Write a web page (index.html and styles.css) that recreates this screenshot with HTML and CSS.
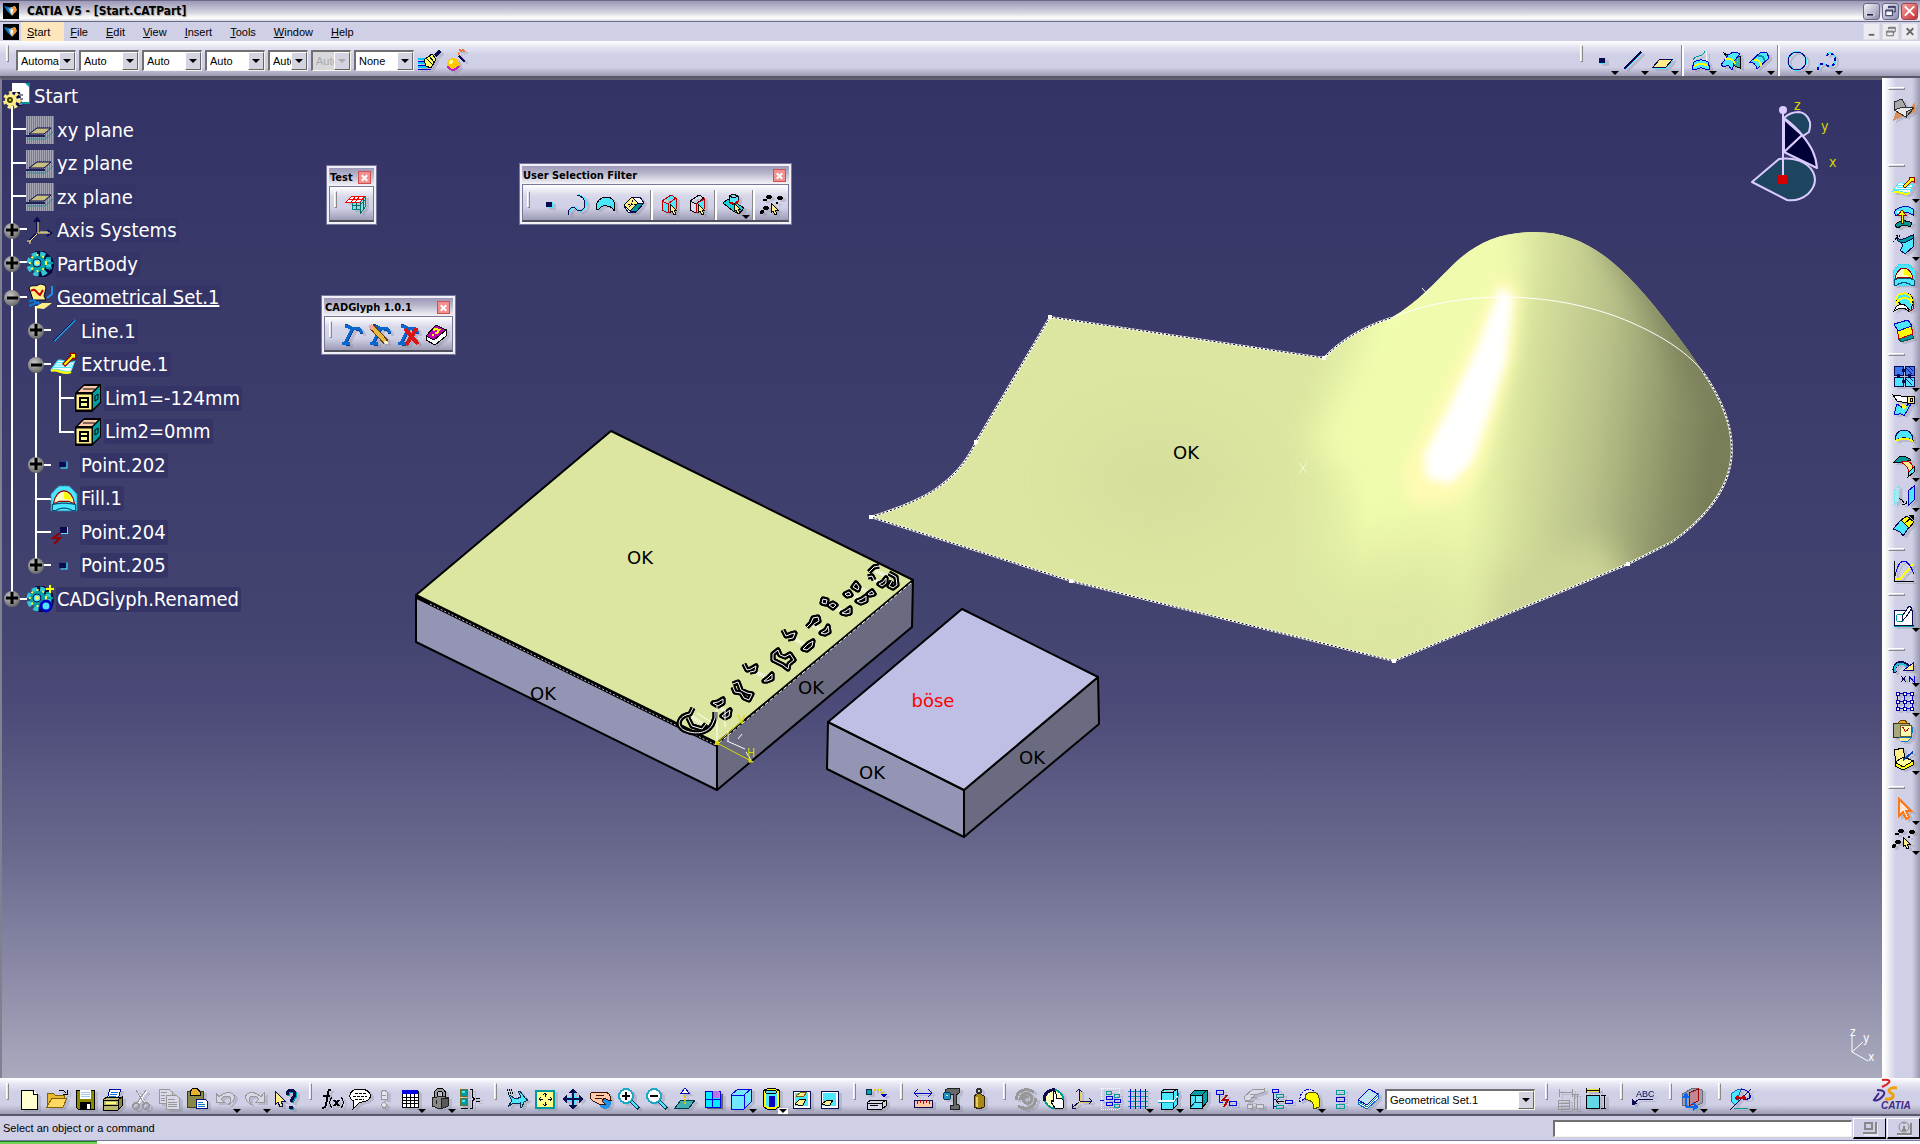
FILE: index.html
```html
<!DOCTYPE html>
<html lang="en">
<head>
  <meta charset="UTF-8" />
  <title>CATIA V5 - [Start.CATPart]</title>
  <link rel="stylesheet" href="styles.css">
</head>
<body>

  <!-- shared icons -->
  <svg class="sprite" aria-hidden="true">
    <defs>
      <radialGradient id="ball" cx="40%" cy="35%" r="65%"><stop offset="0" stop-color="#c8c8c8"/><stop offset="1" stop-color="#6a6a6a"/></radialGradient>
      <linearGradient id="space" x1="0" y1="0" x2="1" y2="1"><stop offset="0" stop-color="#0878d8"/><stop offset=".5" stop-color="#fff0b0"/><stop offset="1" stop-color="#c03800"/></linearGradient>
    </defs>
    <symbol id="app" viewBox="0 0 16 16"><path fill="#000" d="M0 0h16v16H0z"/><path fill="#0a70c8" d="M1 3l5 1 3 4-1 4-4-4z"/><path fill="url(#space)" d="M5 5l7-2 2 4-5 6z"/><path fill="#ff9030" d="M9 4h4v5l-3 1z"/><path fill="#fff" d="M8 6h2v3H8z"/></symbol>
    <symbol id="plus" viewBox="0 0 16 16"><circle cx="8" cy="8" r="8" fill="url(#ball)" stroke="none"/><path fill="none" stroke="#000" stroke-width="3" d="M2 7h12M8 1v12"/></symbol>
    <symbol id="minus" viewBox="0 0 16 16"><circle cx="8" cy="8" r="8" fill="url(#ball)" stroke="none"/><path fill="none" stroke="#000" stroke-width="3" d="M3 8h11"/></symbol>
    <symbol id="plane" viewBox="0 0 28 28"><path fill="#77779a" stroke="none" d="M0 0h28v28H0z"/><path stroke="#a6a6b4" stroke-width="28" stroke-dasharray="1 1" d="M0 14h28"/><path fill="#c8c080" stroke="#000050" d="M3 18l8-6h14l-7 6z"/><path stroke="#20205a" stroke-width="2" d="M0 20h19"/><path stroke="#309090" d="M1 23h18l8-7"/></symbol>
    <symbol id="gear" viewBox="0 0 28 28"><path fill="#0a0a40" stroke="none" d="M9 1h9l5 4 4 4 1 7-2 7-6 4h-9z"/><circle cx="13" cy="14" r="10" stroke="#30c8d8" stroke-width="5" stroke-dasharray="5 3"/><circle cx="12" cy="14" r="8" fill="#009fa8" stroke="none"/><circle cx="12" cy="13" r="8" stroke="#ffff40" stroke-width="2" stroke-dasharray="2 4"/><circle cx="11" cy="13" r="4" fill="#4de6ff" stroke="#0a0a50"/><circle cx="11" cy="13" r="2" fill="#ffee66" stroke="none"/><path stroke="#009fa8" stroke-width="2" d="M20 8h5M21 13h6M20 18h6"/></symbol>
    <symbol id="extrude" viewBox="0 0 24 24"><path fill="#fff" stroke="#4de6ff" d="M1 16l6-8c4-1 8 3 14 1l-3 8c-5 3-10-3-17-1z"/><path stroke="#4de6ff" d="M3 14h15M5 12h14M6 10h12"/><path stroke="#ffff00" stroke-width="2" d="M1 17c6-2 10 4 17 1"/><path fill="#ffff00" stroke="#900000" d="M17 2h5v5l-2-1-7 7-2-2 7-7z"/></symbol>
    <symbol id="fill" viewBox="0 0 24 24"><path fill="#4de6ff" stroke="#2cc8ea" stroke-dasharray="1 1" d="M1 8c2-2 4-5 7-7h8c3 2 5 5 7 7v14H1z"/><path fill="#fffbc8" stroke="#900000" d="M3 16C4 9 8 5 12 5s8 4 9 11l-5-2H8z"/><path fill="#ffff00" stroke="none" d="M12 6c4 0 6 4 7 8l-4-2h-3z"/><path fill="#4de6ff" stroke="#0a5078" d="M2 17v5h3c3-3 11-3 14 0h3v-5c-4-2-16-2-20 0z"/></symbol>
    <symbol id="point" viewBox="0 0 24 24"><path fill="#4de6ff" stroke="none" d="M9 9h6v6H9z"/><path fill="#0a0a50" stroke="none" d="M8 9h6v5H8z"/></symbol>
    <symbol id="lim" viewBox="0 0 28 28"><path fill="#000" stroke="none" d="M1 9L10 0h17v19l-9 9H1z"/><path fill="#009fa0" stroke="none" d="M19 9l7-7v16l-7 7z"/><path fill="#ffc8a8" stroke="none" d="M4 8l6-6h14l-6 6z"/><path stroke="#000" d="M9 5h12M21 12l3-2v5l-3 2z"/><path fill="#ffee88" stroke="#000" d="M2 10h16v16H2z"/><path fill="#ffff98" stroke="#000" stroke-width="2" d="M6 14h8v9H6zM6 18h8"/></symbol>
    <symbol id="cursor" viewBox="0 0 10 14"><path fill="#ffee88" stroke="#000" d="M1 1v10l2-2 2 4 2-1-2-4h3z"/></symbol>
    <symbol id="dots" viewBox="0 0 24 24"><g fill="#000" stroke="none"><ellipse cx="9" cy="4" rx="3" ry="2"/><ellipse cx="5" cy="7" rx="2" ry="1.500"/><ellipse cx="20" cy="5" rx="3" ry="2"/><ellipse cx="6" cy="15" rx="3" ry="2"/><circle cx="17" cy="10" r="1"/><circle cx="2" cy="19" r="2"/></g><use href="#cursor" x="10" y="9" width="10" height="14"/></symbol>
    <symbol id="hammer" viewBox="0 0 24 24"><path stroke="#0a3c98" stroke-width="3" d="M5 2l7 3 8 2 2 4M13 6L6 20M2 20l8 2"/><path stroke="#0868d0" stroke-width="3" d="M5 3l7 2 8 1 2 4M12 6L5 20M2 20l8 1"/></symbol>
    <symbol id="spline" viewBox="0 0 24 24"><path stroke="#4de6ff" stroke-width="2" d="M3 22c0-8 6-9 8-6s8 2 9-5c0-5-4-8-8-9"/><path stroke="#0a0a50" d="M2 22c0-8 6-9 8-6s9 2 9-5c0-5-4-8-8-9"/></symbol>
  </svg>

  <header>
    <div class="titlebar">
      <svg class="app-icon"><use href="#app"/></svg>
      <h1>CATIA V5 - [Start.CATPart]</h1>
      <div class="win-buttons">
        <button aria-label="Minimize"><svg viewBox="0 0 16 16"><path stroke="#fff" stroke-width="3" d="M2 12h9"/><path stroke="#202050" stroke-width="2" d="M3 12h7"/></svg></button>
        <button aria-label="Restore"><svg viewBox="0 0 16 16"><path stroke="#202050" d="M6 5V3h7v6h-2M6 4h7"/><path fill="#fff" stroke="#202050" d="M3 7h7v6H3zM3 8h7"/></svg></button>
        <button class="close" aria-label="Close"><svg viewBox="0 0 16 16"><path stroke="#fff" stroke-width="2" d="M3 3l10 10M13 3L3 13"/></svg></button>
      </div>
    </div>

    <nav class="menubar">
      <svg class="app-icon"><use href="#app"/></svg>
      <ul>
        <li class="active"><a href="#"><u>S</u>tart</a></li>
        <li><a href="#"><u>F</u>ile</a></li>
        <li><a href="#"><u>E</u>dit</a></li>
        <li><a href="#"><u>V</u>iew</a></li>
        <li><a href="#"><u>I</u>nsert</a></li>
        <li><a href="#"><u>T</u>ools</a></li>
        <li><a href="#"><u>W</u>indow</a></li>
        <li><a href="#"><u>H</u>elp</a></li>
      </ul>
      <div class="win-buttons doc-buttons">
        <button aria-label="Minimize document"><svg viewBox="0 0 16 16"><path stroke="#666" stroke-width="2" d="M5 11h6"/></svg></button>
        <button aria-label="Restore document"><svg viewBox="0 0 16 16"><path stroke="#666" d="M6 5V3h7v5h-2M6 4h7M4 7h7v5H4zM4 8h7"/></svg></button>
        <button aria-label="Close document"><svg viewBox="0 0 16 16"><path stroke="#666" stroke-width="2" d="M5 4l7 7M12 4l-7 7"/></svg></button>
      </div>
    </nav>

    <div class="toolbar top-toolbar">
      <span class="grip"></span>
      <div class="combos">
        <label class="combo"><select aria-label="Fill color"><option>Automatic</option></select><i></i></label>
        <label class="combo"><select aria-label="Transparency"><option>Auto</option></select><i></i></label>
        <label class="combo"><select aria-label="Line weight"><option>Auto</option></select><i></i></label>
        <label class="combo"><select aria-label="Line type"><option>Auto</option></select><i></i></label>
        <label class="combo short"><select aria-label="Point symbol"><option>Auto</option></select><i></i></label>
        <label class="combo short disabled"><select aria-label="Rendering style" disabled><option>Auto</option></select><i></i></label>
        <label class="combo"><select aria-label="Layer"><option>None</option></select><i></i></label>
      </div>
      <button class="tool wide" aria-label="Painter"><svg viewBox="0 0 24 24"><path stroke="#00c8ff" stroke-width="2" d="M1 10h8M1 14h9M1 18h12"/><path stroke="#0000c0" d="M1 12h8M1 16h10M1 20h13"/><path fill="#ffff60" stroke="#000" d="M7 11l8-6 4 5-5 9-5-2z"/><path fill="#fff" stroke="#000" d="M9 9l7 7M12 7l5 6"/><path stroke="#0a0a50" stroke-width="3" d="M18 7l5-5"/></svg></button>
      <button class="tool" aria-label="Wizard"><svg viewBox="0 0 24 24"><circle cx="7" cy="15" r="6" fill="#ffc800" stroke="none"/><path stroke="#c020c0" stroke-width="2" d="M2 17c1 5 8 5 11 0"/><circle cx="5" cy="13" r="2" fill="#ffffa0" stroke="none"/><path stroke="#0a0a50" stroke-width="2" d="M13 7l6 6"/><path stroke="#e87848" stroke-width="2" stroke-dasharray="2 1" d="M12 5l4-3h4M13 1h6"/></svg></button>

      <div class="toolbar-right">
        <span class="grip"></span>
        <button class="tool more" aria-label="Point"><svg><use href="#point"/></svg></button>
        <button class="tool more" aria-label="Line"><svg viewBox="0 0 24 24"><path stroke="#4de6ff" d="M4 21L21 4"/><path stroke="#0a0a50" stroke-width="2" d="M3 20L20 3"/></svg></button>
        <button class="tool more" aria-label="Plane"><svg viewBox="0 0 24 24"><path stroke="#4de6ff" d="M2 19h14l6-8"/><path fill="#ffee88" stroke="#0a0a50" d="M2 18l7-8h13l-7 8z"/></svg></button>
        <span class="sep"></span>
        <button class="tool more" aria-label="Projection"><svg viewBox="0 0 24 24"><path stroke="#009999" d="M4 11c3-7 8 0 12-9"/><path stroke="#fff" d="M17 3v10"/><path fill="#4de6ff" stroke="#0000c0" d="M3 20l2-7c5-3 9-3 14 0l2 7-3 1c-4-3-8-3-12 0z"/><path stroke="#ffff00" stroke-width="2" d="M5 17c5-3 9-3 14 0"/></svg></button>
        <button class="tool" aria-label="Intersection"><svg viewBox="0 0 24 24"><path fill="#30b0a8" stroke="#000" d="M5 4l6 3h10v12l-8-3z"/><path stroke="#4de6ff" stroke-dasharray="1 2" d="M12 9h8M12 12h8"/><path fill="#4de6ff" stroke="#0000c0" d="M2 16L9 6c4-3 8-4 12-1l-5 6-3 10-4-5-4 2z"/><path stroke="#ffff00" stroke-width="2" d="M6 10c5-1 9 1 10 5"/></svg></button>
        <button class="tool more" aria-label="Parallel Curve"><svg viewBox="0 0 24 24"><path fill="#4de6ff" stroke="#0000c0" d="M2 14L14 3l6 1 2 5-12 11c-1-5-4-7-8-6z"/><path stroke="#ffff00" stroke-width="2" d="M7 11c4-1 7 2 7 6"/><path stroke="#009999" stroke-width="2" d="M11 7c4-1 6 2 7 5"/></svg></button>
        <span class="sep"></span>
        <button class="tool more" aria-label="Circle"><svg viewBox="0 0 24 24"><circle cx="12" cy="12" r="9" stroke="#4de6ff" stroke-width="2"/><circle cx="12" cy="12" r="9" stroke="#0a0a80"/></svg></button>
        <button class="tool more" aria-label="Spline"><svg viewBox="0 0 24 24"><path stroke="#4de6ff" stroke-width="2" d="M3 21c0-6 4-7 8-5s10 1 9-6-7-7-8-3"/><path stroke="#0000c0" stroke-width="2" stroke-dasharray="3 3" d="M3 21c0-6 4-7 8-5s10 1 9-6-7-7-8-3"/></svg></button>
      </div>
    </div>
  </header>

  <main>
    <section class="viewport">
      <!-- part geometry -->
      <svg class="scene" viewBox="2 80 1880 998" preserveAspectRatio="xMinYMin slice">
        <defs>
          <path id="surface" d="M871 517C918 502 955 487 976 442L1050 317L1324 358C1342 339 1366 326 1391 318C1418 303 1438 279 1456 262C1477 243 1500 232 1535 232C1582 232 1616 259 1655 307C1675 332 1690 352 1703 372C1746 434 1745 490 1672 542L1628 564L1394 661L1071 581Z"/>
          <clipPath id="surfaceClip"><use href="#surface"/></clipPath>
          <linearGradient id="shade" gradientUnits="userSpaceOnUse" x1="1290" y1="400" x2="1731" y2="450">
            <stop offset="0" stop-color="#dce6a0" stop-opacity="0"/><stop offset=".2" stop-color="#f1fdae"/><stop offset=".42" stop-color="#effaad"/><stop offset=".52" stop-color="#d9e39d"/><stop offset=".7" stop-color="#b8c088"/><stop offset=".87" stop-color="#8b9267"/><stop offset=".96" stop-color="#787e58"/>
          </linearGradient>
          <filter id="soft" x="-50%" y="-50%" width="200%" height="200%"><feGaussianBlur stdDeviation="16"/></filter>
          <filter id="soft2" x="-50%" y="-50%" width="200%" height="200%"><feGaussianBlur stdDeviation="7"/></filter>
          <filter id="soft3" x="-50%" y="-50%" width="200%" height="200%"><feGaussianBlur stdDeviation="36"/></filter>
          <filter id="soft4" x="-50%" y="-50%" width="200%" height="200%"><feGaussianBlur stdDeviation="4"/></filter>
        </defs>
        <use href="#surface" fill="#dce6a0"/>
        <g clip-path="url(#surfaceClip)">
          <ellipse cx="1160" cy="480" rx="90" ry="55" fill="#d5de9c" filter="url(#soft3)"/>
          <path fill="url(#shade)" d="M1290 200H1760V640H1290z"/>
          <path fill="#f0fbae" filter="url(#soft)" d="M1340 390L1400 310L1490 230L1520 245L1505 330L1465 470L1420 500L1350 480L1310 440z"/>
          <path fill="#dce6a0" filter="url(#soft3)" d="M1220 560L1340 560L1450 540L1510 600L1480 720L1200 700z"/>
          <path fill="#cdd696" filter="url(#soft)" d="M1500 570L1600 540L1640 600L1480 680z"/>
          <path fill="#7b815b" filter="url(#soft)" d="M1595 225L1650 300L1700 400L1760 400V225z"/>
          <path fill="#fffbb4" filter="url(#soft2)" d="M1498 275L1520 288L1514 355L1496 420L1480 472L1452 504H1410L1402 470L1440 400L1475 330z"/>
          <path fill="#fff" filter="url(#soft4)" d="M1500 286L1513 296L1506 360L1487 420L1472 462L1450 484L1426 478L1424 455L1450 405L1480 340z"/>
        </g>
        <path class="edge-light" d="M871 517C918 502 955 487 976 442L1050 317L1324 358C1342 339 1366 326 1391 318M1703 372C1746 434 1745 490 1672 542L1628 564L1394 661L1071 581L871 517"/>
        <path class="edge-dots" d="M871 517C918 502 955 487 976 442L1050 317L1324 358C1342 339 1366 326 1391 318M1703 372C1746 434 1745 490 1672 542L1628 564L1394 661L1071 581L871 517"/>
        <path fill="none" stroke="#fff" d="M1391 318C1475 284 1570 296 1630 322C1665 337 1690 355 1703 372"/>
        <path fill="#fff" d="M869 515h4v4h-4zM974 440h4v4h-4zM1048 315h4v4h-4zM1322 356h4v4h-4zM1069 579h4v4h-4zM1392 659h4v4h-4zM1626 562h4v4h-4z"/>
        <path fill="none" stroke="#f8ffd8" d="M1299 463l8 10M1307 463l-8 10M1422 288l8 9M1430 288l-8 9"/>

        <!-- engraved block -->
        <g stroke="#000" stroke-width="2" stroke-linejoin="round">
          <path fill="#9494b4" d="M416 597L717 745V790L416 642z"/>
          <path fill="#6a6a80" d="M717 744L913 580L912 627L717 790z"/>
          <path fill="#dce6a0" d="M611 431L913 580L717 743L416 595z"/>
          <path fill="none" d="M417 598L717 746"/>
        </g>
        <path fill="none" stroke="#fff" stroke-dasharray="4 2" d="M911 583L719 743"/>
        <path fill="none" stroke="#ccc" stroke-dasharray="2 2" d="M430 604L716 745"/>
        <g>
          <path fill="none" stroke="#fff" stroke-width="4" stroke-dasharray="1 1" d="M692 717l12 8M718 705l9 8M749 669l19 9M790 637l18 9M812 625l13 7M834 607l12 6M858 587l12 6M850 594l12 6M875 570l14 8M869 577l12 6"/>
          <path id="glyphs" class="glyph-outline" d="M693 708l-3 6c-12 2-14 12-6 16s22 5 28-5l3-7v-6M688 718l4 8 10 3 4-5M713 703l5-1 5-3v4l-5 3zM722 716l4-3 4-3-1 6-4 2zM733 684l5-2 3 8 6 3 5 1-3 6-5-2-3-5-6-1-2-5M744 664l3 6 4-1 5-3-1 5-5 1M764 681l4-3 4-4v5l-5 2zM773 654l5-4 2 5 5 2 5-3 4 6-5 4-1 5-5-4-6-3-4-2zM783 630l3 6 5-2 4-1-2 5-5 1M803 649l5-5 5-3-1 5-5 4zM807 627l4-4 2-5 5-1 1 4-5 3M821 633l5-3 2-4 1 6-4 2zM822 603l1-4 4 1-1 4zM829 605l4-2 3 2-3 3zM842 613l4-2 4-3v5l-4 1zM845 594l4-2 2 3-4 1zM853 587l3-4 3 4-1 3zM868 594l4-3 2 3-4 1zM857 601l5-2 4-3v5l-5 2zM869 572l5-5 5-1M868 577l4-1 2 4M879 584l4-2 3-4v5l-4 3zM889 573l7 4 1 8-4 3-4-2 3-5"/>
          <use href="#glyphs" class="glyph-fill"/>
          <path class="glyph-fill" d="M693 708l-3 6c-12 2-14 12-6 16s22 5 28-5l3-7v-6M688 718l4 8 10 3 4-5M713 703l5-1 5-3v4l-5 3zM722 716l4-3 4-3-1 6-4 2zM733 684l5-2 3 8 6 3 5 1-3 6-5-2-3-5-6-1-2-5M744 664l3 6 4-1 5-3-1 5-5 1M764 681l4-3 4-4v5l-5 2zM773 654l5-4 2 5 5 2 5-3 4 6-5 4-1 5-5-4-6-3-4-2zM783 630l3 6 5-2 4-1-2 5-5 1M803 649l5-5 5-3-1 5-5 4zM807 627l4-4 2-5 5-1 1 4-5 3M821 633l5-3 2-4 1 6-4 2zM822 603l1-4 4 1-1 4zM829 605l4-2 3 2-3 3zM842 613l4-2 4-3v5l-4 1zM845 594l4-2 2 3-4 1zM853 587l3-4 3 4-1 3zM868 594l4-3 2 3-4 1zM857 601l5-2 4-3v5l-5 2zM869 572l5-5 5-1M868 577l4-1 2 4M879 584l4-2 3-4v5l-4 3zM889 573l7 4 1 8-4 3-4-2 3-5"/>
        </g>
        <path fill="none" stroke="#fff" d="M717 743v-37M725 727v-17M697 713l14 9M727 741l18 8M728 741v-10M738 739l4-5M746 752l5 8"/>
        <path fill="none" stroke="#d8d800" d="M717 743L753 762M717 743l25-22"/>
        <path fill="#d8d800" d="M715 741h4v4h-4zM748 758l6 4-5 1z"/>
        <text class="axis" x="738" y="724">V</text>
        <text class="axis" x="747" y="757">H</text>

        <!-- plain block -->
        <g stroke="#000" stroke-width="2" stroke-linejoin="round">
          <path fill="#9494b4" d="M828 722L964 790V837L827 769z"/>
          <path fill="#6a6a80" d="M964 790L1098 677L1099 724L964 837z"/>
          <path fill="#bfbfe6" d="M962 609L1098 677L964 790L828 722z"/>
        </g>

        <g class="note">
          <text x="1186" y="459">OK</text>
          <text x="640" y="564">OK</text>
          <text x="543" y="700">OK</text>
          <text x="811" y="694">OK</text>
          <text x="872" y="779">OK</text>
          <text x="1032" y="764">OK</text>
          <text class="bad" x="933" y="707">böse</text>
        </g>

        <!-- compass -->
        <g stroke="#dccbff" stroke-width="2" stroke-linejoin="round">
          <path fill="#1d4560" d="M1784 118c4-4 9-6 15-6 8 1 12 9 11 15l-1 5-6 4c-6-8-12-13-19-18z"/>
          <path fill="#000038" d="M1784 152l18-17c9 11 14 20 15 33z"/>
          <path fill="#000038" d="M1784 119l18 16-18 17z"/>
          <path fill="#1d4560" d="M1752 182l27-23c14-2 28 2 34 13 4 8 2 15-5 22-6 5-14 7-21 6z"/>
          <path fill="none" d="M1783 110v66"/>
        </g>
        <circle cx="1783" cy="110" r="4" fill="#dccbff"/>
        <path fill="#d40000" d="M1778 175h9v9h-9z"/>
        <text class="axis big" x="1794" y="110">z</text>
        <text class="axis big" x="1821" y="131">y</text>
        <text class="axis big" x="1829" y="167">x</text>

        <path fill="none" stroke="#fff" d="M1852 1035v17l11-10M1852 1052l16 9"/>
        <text class="axis light" x="1850" y="1036">z</text>
        <text class="axis light" x="1863" y="1042">y</text>
        <text class="axis light" x="1868" y="1061">x</text>
      </svg>

      <!-- specification tree -->
      <div class="tree">
        <svg class="tree-lines" viewBox="0 0 110 536"><path d="M10 26v493M10 49h15M10 83h15M10 116h15M10 149h15M10 182h15M10 217h15M10 519h15M34 226v259M34 250h15M34 284h15M34 385h15M34 419h15M34 452h15M34 485h15M58 296v56h14M58 318h14"/></svg>
        <ul>
          <li class="root"><svg viewBox="0 0 28 28"><path fill="#009999" stroke="none" d="M9 0h18v21H9z"/><path fill="#fff" stroke="none" d="M9 0h13l4 4v15H9z"/><path fill="#0a0a50" stroke="none" d="M9 9h8l2 14h-8z"/><circle cx="9" cy="17" r="7" stroke="#ffee88" stroke-width="4" stroke-dasharray="3 3"/><circle cx="8" cy="17" r="6" fill="#ffee88" stroke="none"/><circle cx="7" cy="17" r="2" fill="#ffff00" stroke="#404000" stroke-width="2"/><path stroke="#808098" stroke-width="2" d="M16 12h4M17 16h3M16 21h3"/></svg><span>Start</span></li>
          <li><svg><use href="#plane"/></svg><span>xy plane</span></li>
          <li><svg><use href="#plane"/></svg><span>yz plane</span></li>
          <li><svg><use href="#plane"/></svg><span>zx plane</span></li>
          <li><button aria-label="Expand Axis Systems"><svg><use href="#plus"/></svg></button><svg viewBox="0 0 28 28"><path stroke="#0a0a50" stroke-width="2" d="M11 15V1M8 5l3-4 3 4M21 13l4 3-4 3M10 17l-7 7"/><path stroke="#ffee88" d="M12 5v11h12M11 17l-8 8M1 24h3v3M14 15h8"/></svg><span>Axis Systems</span></li>
          <li><button aria-label="Expand PartBody"><svg><use href="#plus"/></svg></button><svg><use href="#gear"/></svg><span>PartBody</span></li>
          <li class="current"><button aria-label="Collapse Geometrical Set.1"><svg><use href="#minus"/></svg></button><svg viewBox="0 0 28 28"><path fill="#ffee88" stroke="#000030" d="M3 4c2-4 6-1 9-3s8 0 8 3l-2 8 2 4H7z"/><path stroke="#c00000" stroke-width="2" d="M5 7c4-4 5 2 9 4l3-5"/><path stroke="#0878d8" stroke-width="2" d="M3 18c3-3 6-2 7 1M3 22l9-4 2 4"/><path stroke="#2090e8" stroke-width="2" d="M26 2v8l-5 4"/><path fill="#ffee88" stroke="none" d="M8 24l8-5 10 0-8 6z"/></svg><span>Geometrical Set.1</span></li>
          <li class="l2"><button aria-label="Expand Line.1"><svg><use href="#plus"/></svg></button><svg viewBox="0 0 28 28"><path stroke="#2098e0" stroke-width="2" d="M4 24L25 3"/><path stroke="#0a0a50" d="M3 24L24 3"/></svg><span>Line.1</span></li>
          <li class="l2"><button aria-label="Collapse Extrude.1"><svg><use href="#minus"/></svg></button><svg><use href="#extrude"/></svg><span>Extrude.1</span></li>
          <li class="l3"><svg><use href="#lim"/></svg><span>Lim1=-124mm</span></li>
          <li class="l3"><svg><use href="#lim"/></svg><span>Lim2=0mm</span></li>
          <li class="l2"><button aria-label="Expand Point.202"><svg><use href="#plus"/></svg></button><svg><use href="#point"/></svg><span>Point.202</span></li>
          <li class="l2"><svg><use href="#fill"/></svg><span>Fill.1</span></li>
          <li class="l2"><svg viewBox="0 0 28 28"><path fill="#4de6ff" stroke="none" d="M11 9h7v7h-7z"/><path fill="#0a0a50" stroke="none" d="M10 9h7v6h-7z"/><path stroke="#900000" stroke-width="2" d="M10 15l-7 5h7l-6 6"/></svg><span>Point.204</span></li>
          <li class="l2"><button aria-label="Expand Point.205"><svg><use href="#plus"/></svg></button><svg><use href="#point"/></svg><span>Point.205</span></li>
          <li><button aria-label="Expand CADGlyph.Renamed"><svg><use href="#plus"/></svg></button><svg viewBox="0 0 28 28"><use href="#gear"/><circle cx="20" cy="21" r="5" fill="#4de6ff" stroke="#0000c0" stroke-width="3"/><path stroke="#ffff00" stroke-width="2" d="M24 0v8M20 4h8"/></svg><span>CADGlyph.Renamed</span></li>
        </ul>
      </div>

      <!-- floating toolbars -->
      <div class="float float-test">
        <div class="float-title"><h2>Test</h2><button aria-label="Close Test"><svg viewBox="0 0 12 12"><path d="M3 3l6 6M9 3L3 9"/></svg></button></div>
        <div class="float-body">
          <span class="grip"></span>
          <button class="tool" aria-label="Test"><svg viewBox="0 0 24 24"><path fill="#98d8d8" stroke="#008888" d="M7 9h8l5-5v10l-5 7v-5H7z"/><path stroke="#006868" d="M11 9v7M15 9v12M7 12h8l5-5M18 6v11"/><path fill="#fff" stroke="#f00" d="M1 9l6-6h13l-5 6zM4 6h14M6 9l5-6M10 9l5-6"/></svg></button>
        </div>
      </div>

      <div class="float float-filter">
        <div class="float-title"><h2>User Selection Filter</h2><button aria-label="Close User Selection Filter"><svg viewBox="0 0 12 12"><path d="M3 3l6 6M9 3L3 9"/></svg></button></div>
        <div class="float-body">
          <span class="grip"></span>
          <button class="tool" aria-label="Point Filter"><svg><use href="#point"/></svg></button>
          <button class="tool" aria-label="Curve Filter"><svg><use href="#spline"/></svg></button>
          <button class="tool" aria-label="Surface Filter"><svg viewBox="0 0 24 24"><path fill="#4de6ff" stroke="#000" d="M2 16C2 8 7 4 12 4s9 3 9 11l-1 3c-2-6-12-7-15-2z"/></svg></button>
          <button class="tool" aria-label="Volume Filter"><svg viewBox="0 0 24 24"><path fill="#fff" stroke="#0a0a50" d="M10 4h8l4 6-8 9H6l-4-6z"/><path fill="#ffee88" stroke="#000" d="M2 12l8-8 6 6-8 8z"/><path fill="#009999" stroke="#0a0a50" d="M8 18l8-8h6l-8 9z"/><path stroke="#000" stroke-dasharray="2 1" d="M6 11h8M11 7l-4 8"/></svg></button>
          <span class="sep"></span>
          <button class="tool" aria-label="Feature Element Filter"><svg viewBox="0 0 24 24"><path fill="#4de6ff" stroke="#c00000" d="M4 8l9-6 5 3v11l-8 4-6-3zM4 8l6 3 8-6M10 11v9"/><use href="#cursor" x="11" y="10" width="10" height="13"/></svg></button>
          <button class="tool" aria-label="Geometrical Element Filter"><svg viewBox="0 0 24 24"><path fill="#d8d8ee" stroke="#000" d="M4 8l9-6 5 3v11l-8 4-6-3zM4 8l6 3 8-6M10 11v9"/><path fill="#4de6ff" stroke="#c00000" d="M10 11l8-5v10l-8 4z"/><use href="#cursor" x="11" y="10" width="10" height="13"/></svg></button>
          <span class="sep"></span>
          <button class="tool more" aria-label="Work On Support Selection"><svg viewBox="0 0 24 24"><path fill="#20d0d8" stroke="#000" d="M1 10l5-4 5 2 11 7-5 6-6-3z"/><path fill="#4de6ff" stroke="#000" d="M7 3l4-2 5 2v6l-4 3-5-3zM7 3l5 2 4-2"/><path stroke="#c00000" stroke-width="2" d="M7 9l5 2 5-3"/><use href="#cursor" x="11" y="9" width="10" height="13"/></svg></button>
          <span class="sep"></span>
          <button class="tool" aria-label="Quick Select"><svg><use href="#dots"/></svg></button>
        </div>
      </div>

      <div class="float float-glyph">
        <div class="float-title"><h2>CADGlyph 1.0.1</h2><button aria-label="Close CADGlyph"><svg viewBox="0 0 12 12"><path d="M3 3l6 6M9 3L3 9"/></svg></button></div>
        <div class="float-body">
          <span class="grip"></span>
          <button class="tool" aria-label="Create Text"><svg><use href="#hammer"/></svg></button>
          <button class="tool" aria-label="Edit Text"><svg viewBox="0 0 24 24"><use href="#hammer"/><path stroke="#604010" stroke-width="6" d="M4 4l14 15"/><path stroke="#e8b840" stroke-width="4" d="M5 5l12 13"/><path stroke="#f8a0a0" stroke-width="4" d="M2 2l3 4"/><path stroke="#fff0c0" stroke-width="3" d="M17 18l2 3"/></svg></button>
          <button class="tool" aria-label="Delete Text"><svg viewBox="0 0 24 24"><use href="#hammer"/><path stroke="#d81818" stroke-width="4" d="M9 6l13 15M21 5L10 22"/></svg></button>
          <button class="tool" aria-label="Help"><svg viewBox="0 0 24 24"><path fill="#fff" stroke="#000" d="M2 13l8 4 12-10v6l-11 9-9-5z"/><path fill="#c000b0" stroke="#000" d="M2 13L12 2l10 5-12 10z"/><path stroke="#ffff00" stroke-width="2" d="M9 7l3-1 3 1-2 3h-2M10 12h-2"/></svg></button>
        </div>
      </div>
    </section>

    <aside class="sidebar">
      <span class="hgrip"></span>
      <div class="dock dock-bench">
        <button class="tool" aria-label="Workbench"><svg viewBox="0 0 24 24"><path fill="#d89058" stroke="none" d="M1 23L5 10l6 8 12-14v10c-6 2-8 6-14 5z"/><path fill="#a8a8a8" stroke="#303030" d="M2 4l8-3 4 8 8 1-7 8-12-6z"/><path fill="#e8e8e8" stroke="#303030" d="M2 12l9-3 11 1-8 4v5z"/></svg></button>
      </div>
      <span class="hgrip"></span>
      <div class="dock">
        <button class="tool more" aria-label="Extrude"><svg><use href="#extrude"/></svg></button>
        <button class="tool" aria-label="Offset"><svg viewBox="0 0 24 24"><path fill="#4de6ff" stroke="#0000c0" d="M2 7C6 1 16 0 21 4v6c-6-4-12-3-17 1z"/><path fill="#fff" stroke="none" d="M5 6h6v2H5z"/><path fill="#009999" stroke="#000" d="M3 21c2-5 10-7 17-3l-2 4c-5-3-8-2-12 1z"/><path fill="#ffff00" stroke="#900000" d="M9 18V10H6l4-5 4 5h-3v8z"/></svg></button>
        <button class="tool more" aria-label="Sweep"><svg viewBox="0 0 24 24"><path fill="#4de6ff" stroke="#0a0a50" d="M9 8c4 2 8-2 12-6v12l-8 7-5-4c3-2 3-5 1-9z"/><path fill="#009999" stroke="#0a0a50" d="M5 5c6 4 10-2 16-3l1 3C16 8 12 12 6 8z"/><path stroke="#000" stroke-dasharray="2 1" d="M1 9l6-7M4 2h3v3"/></svg></button>
        <button class="tool" aria-label="Fill"><svg><use href="#fill"/></svg></button>
        <button class="tool" aria-label="Multi-Sections Surface"><svg viewBox="0 0 24 24"><path fill="#4de6ff" stroke="#000" d="M4 10c0-10 17-11 17 0l-2 10-3-3z"/><path stroke="#ffff00" stroke-width="2" d="M4 9C5 0 19 0 20 10M4 14c2-9 14-9 16-1"/><path fill="#fff" stroke="#000" d="M2 20c3-9 13-9 15 1-4-5-9-5-15-1z"/><path stroke="#c00000" d="M21 10v8l-4 3"/></svg></button>
        <button class="tool" aria-label="Blend"><svg viewBox="0 0 24 24"><path fill="#009999" stroke="#0a5058" d="M6 19l14-4 2 4-13 4z"/><path fill="#ffff00" stroke="#c00000" d="M5 10l14-4 2 9-14 5z"/><path fill="#4de6ff" stroke="#0000c0" d="M2 5l14-4 4 6-14 5z"/></svg></button>
      </div>
      <span class="hgrip"></span>
      <div class="dock">
        <button class="tool more" aria-label="Join"><svg viewBox="0 0 24 24"><g fill="#4de6ff" stroke="#0a0a50"><path fill="#4078f0" d="M2 2h9v9H2zM13 2h9v9h-9z"/><path d="M2 13h9v9H2zM13 13h9v9h-9z"/></g><path stroke="#0a0a80" d="M14 4l6 6M17 3l4 4M14 15l6 6M18 14l3 3"/><path stroke="#0a0a50" stroke-width="3" d="M10 6h4M10 17h4M6 10v4M17 10v4"/></svg></button>
        <button class="tool more" aria-label="Split"><svg viewBox="0 0 24 24"><path fill="#4de6ff" stroke="#0000c0" d="M5 10l6 4 9-6-8 14c-4-5-6 0-10-2z"/><path fill="#ffff00" stroke="none" d="M10 10l5 2-4 5z"/><path fill="#fff" stroke="#000" d="M1 1c6 1 10 1 14 2v6L5 7z"/><path fill="#ffee88" stroke="#000" d="M15 2h7v7h-7zM18 4h2v3h-2z"/></svg></button>
        <button class="tool more" aria-label="Boundary"><svg viewBox="0 0 24 24"><path fill="#4de6ff" stroke="#0a0a50" d="M3 16c0-5 3-10 9-10s9 5 9 10c-6-3-12-3-18 0z"/><path stroke="#ffff00" stroke-width="2" d="M3 17c6-3 12-3 18 0"/></svg></button>
        <button class="tool more" aria-label="Fillet"><svg viewBox="0 0 24 24"><path fill="#009999" stroke="#000" d="M2 8l6-6c5 0 8 1 11 4l-8 2z"/><path fill="#ffee88" stroke="#c00000" d="M9 8c6-2 11 0 12 6l-4 5c0-5-3-8-8-11z"/><path fill="#4de6ff" stroke="#000" d="M17 18l5-5v5l-6 5z"/></svg></button>
        <button class="tool more" aria-label="Translate"><svg viewBox="0 0 24 24"><path fill="#a8e8f0" stroke="#4de6ff" stroke-dasharray="1 1" d="M2 7l5-5v14l-5 5z"/><path fill="#4de6ff" stroke="#0000c0" d="M16 7l6-5v14l-6 6z"/><path stroke="#000" stroke-dasharray="3 1" d="M7 14l7 6M10 20h4v-4"/></svg></button>
        <button class="tool" aria-label="Extrapolate"><svg viewBox="0 0 24 24"><path fill="#4de6ff" stroke="#0a0a50" d="M1 15L9 6l8 7-6 9c-2-4-5-6-10-7z"/><path fill="#ffff00" stroke="#000" d="M9 6l6-4 7 6-5 6z"/><path stroke="#000" d="M12 10l9-8"/><path fill="#000" stroke="none" d="M16 1h6v6z"/></svg></button>
      </div>
      <span class="hgrip"></span>
      <div class="dock">
        <button class="tool" aria-label="Law"><svg viewBox="0 0 24 24"><path stroke="#ffff00" stroke-width="2" d="M4 20h4L21 5"/><path stroke="#0000e0" d="M3 17C7-2 15-3 22 15"/><path stroke="#000" d="M2 2v20h20"/></svg></button>
      </div>
      <span class="hgrip"></span>
      <div class="dock dock-sketch">
        <button class="tool more" aria-label="Sketch"><svg viewBox="0 0 24 24"><path fill="#fff" stroke="#0a0a50" d="M2 6h18l1 15H2z"/><path stroke="#009999" d="M2 22h20"/><circle cx="8" cy="14" r="4" stroke="#009999"/><path fill="#fff" stroke="#0a0a50" d="M10 17l1-6 6-9 3 2-6 9z"/></svg></button>
      </div>
      <span class="hgrip"></span>
      <div class="dock dock-repeat">
        <button class="tool more" aria-label="Object Repetition"><svg viewBox="0 0 24 24"><path stroke="#0a0a50" stroke-width="4" d="M3 14C0 5 10-1 17 9"/><path stroke="#20c0d8" stroke-width="2" d="M3 13C1 5 10 1 16 9"/><path fill="#ffee88" stroke="#0a0a80" d="M12 11h9V4z"/><path stroke="#0a0a50" d="M9 17l5 6M14 17l-5 6"/><path stroke="#0000e0" d="M17 23v-6l5 6v-6"/></svg></button>
        <button class="tool more" aria-label="Pattern"><svg viewBox="0 0 24 24"><path stroke="#0000c0" d="M5 4h15M5 12h15M5 19h15M5 4v15M12 4v15M20 4v15"/><path fill="#fff" stroke="#0000a0" d="M4 3h3v3H4zM11 3h3v3h-3zM18 3h3v3h-3zM4 11h3v3H4zM11 11h3v3h-3zM18 11h3v3h-3zM4 18h3v3H4zM11 18h3v3h-3zM18 18h3v3h-3z"/></svg></button>
        <button class="tool" aria-label="Power Copy"><svg viewBox="0 0 24 24"><path fill="#a8a880" stroke="#303020" d="M1 4h16v14H1z"/><path fill="#e8a820" stroke="#604000" d="M6 4l3-3h4l2 3z"/><path fill="#fff8b0" stroke="#606020" d="M8 6h11v11H8z"/><path stroke="#c00000" d="M10 9c3-2 1 4 4 3s2-3 3-3"/><path fill="#ffee88" stroke="#0878d8" d="M7 18h13l-4 4H9M21 8l-1 6"/></svg></button>
        <button class="tool more" aria-label="Catalog"><svg viewBox="0 0 24 24"><path fill="#ffee88" stroke="#000" d="M2 3l9-2 2 9-9 5z"/><path fill="#ffff98" stroke="#000" d="M3 15l9-5 9 4-10 6z"/><path fill="#ffff00" stroke="#000" d="M3 15l8 5 10-6v4l-10 5-8-4z"/><path stroke="#0840c0" stroke-width="2" d="M11 13l10-8"/></svg></button>
      </div>
      <span class="hgrip"></span>
      <div class="dock">
        <button class="tool more" aria-label="Select"><svg viewBox="0 0 24 24"><path fill="#ffe8d8" stroke="#ff7818" stroke-width="2" d="M7 2v17l4-4 3 7 3-2-3-6h5z"/></svg></button>
        <button class="tool more" aria-label="Quick Select"><svg><use href="#dots"/></svg></button>
      </div>
    </aside>
  </main>

  <footer>
    <div class="toolbar bottom-toolbar">
      <span class="grip"></span>
      <button class="tool" aria-label="New"><svg viewBox="0 0 24 24"><path fill="#ffffd0" stroke="#000" d="M4 3h12l4 4v15H4z"/><path fill="#fff" stroke="#000" d="M16 3v4h4"/></svg></button>
      <button class="tool" aria-label="Open"><svg viewBox="0 0 24 24"><path fill="#e8b830" stroke="#806000" d="M2 19V6h6l2 2h9v4H8z"/><path fill="#ffd860" stroke="#806000" d="M2 20l5-9h15l-4 9z"/><path stroke="#000" d="M14 4c3-2 5-1 7 2M22 3v4h-4"/></svg></button>
      <button class="tool" aria-label="Save"><svg viewBox="0 0 24 24"><path fill="#888800" stroke="#000" d="M3 3h18v19H5l-2-2z"/><path fill="#fff" stroke="none" d="M7 3h11v9H7z"/><path stroke="#a0c8e8" d="M8 5h9M8 7h9M8 9h9"/><path fill="#000" stroke="none" d="M7 15h11v7H7z"/><path fill="#fff" stroke="none" d="M14 17h3v5h-3z"/></svg></button>
      <button class="tool" aria-label="Print"><svg viewBox="0 0 24 24"><path fill="#fff" stroke="#0000a0" d="M6 12L9 2h11l-3 10z"/><path stroke="#0878d8" d="M10 5h7M9 7h7M8 9h7"/><path fill="#b8b870" stroke="#000" d="M2 13l4-3h15v9l-4 4H2z"/><path fill="#888838" stroke="#000" d="M2 13h15l4-3v9l-4 4V13M2 18h15"/><path stroke="#ffff80" stroke-width="2" d="M5 16h10"/></svg></button>
      <button class="tool" aria-label="Cut" disabled><svg viewBox="0 0 24 24"><path stroke="#fff" d="M8 4l9 13M18 4L9 17"/><path stroke="#989898" d="M7 3l8 13M17 3L8 16"/><circle cx="7" cy="19" r="3" stroke="#989898" stroke-width="2"/><circle cx="17" cy="19" r="3" stroke="#989898" stroke-width="2"/></svg></button>
      <button class="tool" aria-label="Copy" disabled><svg viewBox="0 0 24 24"><g fill="#d8d8e8" stroke="#989898"><path d="M2 2h10l3 3v11H2z"/><path d="M9 8h10l3 3v11H9z"/></g><path stroke="#989898" d="M4 5h6M4 8h4M4 11h4M4 13h4M11 12h7M11 15h9M11 17h9M11 19h9"/></svg></button>
      <button class="tool" aria-label="Paste"><svg viewBox="0 0 24 24"><path fill="#888848" stroke="#404010" d="M2 4h16v16H2z"/><path fill="#e8b030" stroke="#000" d="M5 5l3-4h4l3 4v3H5z"/><path fill="#fff" stroke="#0a0a80" d="M11 12h9l2 2v7H11z"/><path stroke="#0a70c8" d="M13 15h5M13 17h7M13 19h7"/></svg></button>
      <button class="tool more" aria-label="Undo" disabled><svg viewBox="0 0 24 24"><path fill="#d8d8e8" stroke="#989898" d="M3 6v9h8l-3-3c3-4 9-4 10 0 0 3-2 5-3 6 6-3 8-8 5-11-4-3-10-1-14 3z"/></svg></button>
      <button class="tool more" aria-label="Redo" disabled><svg viewBox="0 0 24 24"><path fill="#d8d8e8" stroke="#989898" d="M21 6v9h-8l3-3c-3-4-9-4-10 0 0 3 2 5 3 6-6-3-8-8-5-11 4-3 10-1 14 3z"/></svg></button>
      <button class="tool" aria-label="What's This?"><svg viewBox="0 0 24 24"><path stroke="#009fb0" stroke-width="3" d="M15 9c0-6 8-6 8-1s-4 3-4 8M17 21h4"/><path stroke="#0a0a50" stroke-width="3" d="M14 8c0-6 8-6 8-1s-4 3-4 8M16 20h4"/><path fill="#ffee88" stroke="#0a0a50" d="M2 4v14l3-3 2 5 3-1-2-5h4z"/></svg></button>

      <span class="grip"></span>
      <button class="tool" aria-label="Formula"><svg viewBox="0 0 24 24"><path stroke="#000" stroke-width="2" d="M11 3c-4-1-3 5-5 15-1 3-2 3-4 3M3 9h7"/><path stroke="#000" d="M12 10c-3 3-3 8 0 11M21 10c3 3 3 8 0 11"/><path stroke="#000" stroke-width="2" d="M14 13l5 6M19 13l-5 6"/></svg></button>
      <button class="tool" aria-label="Comment"><svg viewBox="0 0 24 24"><path fill="#fff" stroke="#000" d="M12 2c13 0 14 12 2 13l-3 1-6 6 1-8C-1 11 1 2 12 2z"/><path stroke="#000" stroke-dasharray="3 1" d="M7 6h11M5 9h14M7 12h9"/></svg></button>
      <button class="tool narrow" aria-label="Check" disabled><svg viewBox="0 0 24 24"><path fill="#e4e4ee" stroke="#989898" d="M8 5l3-2 3 2v7H8zM9 8h4M8 18l3-3 3 3-3 4z"/></svg></button>
      <button class="tool more" aria-label="Design Table"><svg viewBox="0 0 24 24"><path fill="#fff" stroke="#000" d="M4 4h16v16H4z"/><path fill="#0000e0" stroke="none" d="M4 3h16v4H4z"/><path stroke="#000" d="M4 10h16M4 13h16M4 16h16M8 7v13M12 7v13M16 7v13"/></svg></button>
      <button class="tool more" aria-label="Lock"><svg viewBox="0 0 24 24"><path stroke="#000" stroke-width="4" d="M8 11V7c0-6 8-6 8 0v5"/><path stroke="#999" stroke-width="2" d="M8 11V7c0-6 8-6 8 0v5"/><path fill="#888" stroke="#202020" d="M4 11l10-2 6 2v8l-8 3-8-3z"/><path fill="#585858" stroke="#202020" d="M13 12l7-1v8l-7 3zM8 13v4"/></svg></button>
      <button class="tool" aria-label="Equivalent Dimensions"><svg viewBox="0 0 24 24"><path fill="#009999" stroke="#707020" d="M2 2h7v7H2zM2 11h7v7H2z"/><path fill="#4de6ff" stroke="none" d="M4 4h3v2H4zM4 13h3v2H4z"/><path stroke="#000" d="M12 2h2v8l3 2-3 2v7h-2M18 11h4M18 14h4M3 21h7"/></svg></button>

      <span class="grip"></span>
      <button class="tool" aria-label="Fly Mode"><svg viewBox="0 0 24 24"><path fill="#4de6ff" stroke="#0a3050" d="M4 8l7 4 5-2-3-6 2 0 5 7 3 2-4 2-2 5-2 0 0-4-8 1-4 3 3-5 0-3z"/><path stroke="#000" stroke-width="2" stroke-dasharray="1 1" d="M2 3h6M3 6h6"/></svg></button>
      <button class="tool" aria-label="Fit All In"><svg viewBox="0 0 24 24"><path fill="#ffff88" stroke="#009999" stroke-width="2" d="M3 4h18v17H3z"/><path stroke="#000" d="M12 6v4M12 15v4M6 12h4M15 12h4M10 8l2-2 2 2M10 17l2 2 2-2M8 10l-2 2 2 2M17 10l2 2-2 2"/></svg></button>
      <button class="tool" aria-label="Pan"><svg viewBox="0 0 24 24"><path stroke="#4de6ff" stroke-width="4" d="M12 5v14M5 12h14"/><path stroke="#0a0a50" stroke-width="2" d="M12 3v18M3 12h18"/><path fill="#0a0a50" stroke="none" d="M8 6l4-5 4 5zM8 18l4 5 4-5zM6 8l-5 4 5 4zM18 8l5 4-5 4z"/></svg></button>
      <button class="tool" aria-label="Rotate"><svg viewBox="0 0 24 24"><circle cx="16" cy="16" r="6" fill="#2090e8" stroke="none"/><path fill="#ffc8a8" stroke="#401000" d="M2 6l5-1 9 0c5 1 6 5 6 8l-3 0c-3-2-5-2-6 1l3 3-6 0-6-3-3-3z"/><path stroke="#401000" d="M7 8h8M6 11h7"/></svg></button>
      <button class="tool" aria-label="Zoom In"><svg viewBox="0 0 24 24"><path stroke="#0a3050" stroke-width="4" d="M14 14l8 8"/><path stroke="#4de6ff" stroke-width="2" d="M14 14l7 7"/><circle cx="9" cy="9" r="7" fill="#fff" stroke="#20a8c8" stroke-width="2"/><path stroke="#000" stroke-width="2" d="M5 9h8M9 5v8"/></svg></button>
      <button class="tool" aria-label="Zoom Out"><svg viewBox="0 0 24 24"><path stroke="#0a3050" stroke-width="4" d="M14 14l8 8"/><path stroke="#4de6ff" stroke-width="2" d="M14 14l7 7"/><circle cx="9" cy="9" r="7" fill="#fff" stroke="#20a8c8" stroke-width="2"/><path stroke="#000" stroke-width="2" d="M5 9h8"/></svg></button>
      <button class="tool" aria-label="Normal View"><svg viewBox="0 0 24 24"><path fill="#40b0b0" stroke="#003850" d="M2 21l6-8h14l-6 8z"/><path stroke="#e0c000" stroke-width="2" stroke-dasharray="2 1" d="M12 17V5"/><path fill="#fff" stroke="#0000c0" d="M8 6l4-5 4 5z"/></svg></button>
      <button class="tool" aria-label="Create Multi-View"><svg viewBox="0 0 24 24"><path fill="#606068" stroke="none" d="M6 7h16v15H6z"/><path fill="#00f0ff" stroke="#0000e0" d="M4 4h15v16H4zM11 4v16M4 12h15"/><path fill="#c070e8" stroke="none" d="M12 4h6v7h-6z"/></svg></button>
      <button class="tool more" aria-label="Isometric View"><svg viewBox="0 0 24 24"><path fill="#70e8ff" stroke="#0000e0" d="M2 8l7-6h13v13l-7 7H2zM2 8h13v14M15 8l7-6"/></svg></button>
      <button class="tool more framed" aria-label="Shading with Edges"><svg viewBox="0 0 24 24"><path fill="#000" stroke="none" d="M4 3l5-2h7l5 2v17l-5 3H9l-5-3z"/><path fill="#4de6ff" stroke="#ffff00" stroke-width="2" d="M6 5c3-3 10-3 13 0v14c-3 3-10 3-13 0z"/><path fill="#0000c0" stroke="none" d="M10 9h6v11h-6z"/><ellipse cx="12" cy="5" rx="6" ry="2" fill="#4de6ff" stroke="#000"/></svg></button>
      <button class="tool" aria-label="Hide/Show"><svg viewBox="0 0 24 24"><path fill="#fff" stroke="#0a0a50" d="M4 4h17v17H4z"/><path fill="#4de6ff" stroke="none" d="M6 6h13v13H6z"/><path fill="#ffee88" stroke="#806000" d="M7 9l5-4h6l-4 5z"/><path fill="#ffee88" stroke="#000" d="M6 17l5-5h6l-3 6h-5z"/></svg></button>
      <button class="tool" aria-label="Swap Visible Space"><svg viewBox="0 0 24 24"><path fill="#fff" stroke="#0a0a50" d="M4 4h17v17H4z"/><path fill="#4de6ff" stroke="none" d="M6 6h13v13H6z"/><path fill="#ffee88" stroke="#000" d="M5 17l5-4h6l-3 5h-5z"/></svg></button>

      <span class="grip"></span>
      <button class="tool" aria-label="Apply Material"><svg viewBox="0 0 24 24"><circle cx="5" cy="5" r="3" fill="#009fb0" stroke="#0a3050"/><path stroke="#e8c800" stroke-width="2" stroke-dasharray="2 1" d="M10 3h7l2 5"/><path fill="#0000c0" stroke="none" d="M16 7h7l-3 4z"/><path fill="#d8d8e8" stroke="#000" d="M3 16l4-3h15v6l-4 3H3zM3 16h15v6M18 16l4-3M6 18h8"/></svg></button>
      <span class="grip"></span>
      <button class="tool" aria-label="Measure Between"><svg viewBox="0 0 24 24"><path stroke="#0000c0" d="M3 6h18M7 2L3 6l4 4M17 2l4 4-4 4"/><path fill="#ffc8a8" stroke="#0a0a50" d="M3 13h18v7H3z"/><path stroke="#c00000" d="M6 13v4M9 13v3M12 13v4M15 13v3M18 13v4"/></svg></button>
      <button class="tool" aria-label="Measure Item"><svg viewBox="0 0 24 24"><path fill="#686868" stroke="#202020" d="M6 3l4-2h10v5l-3 2v9l3 1v4h-9v-4h3V7H8z"/><circle cx="8" cy="9" r="4" fill="#2090c8" stroke="#003850"/><path stroke="#ffff80" d="M7 8h2"/></svg></button>
      <button class="tool" aria-label="Measure Inertia"><svg viewBox="0 0 24 24"><circle cx="12" cy="4" r="2" stroke="#303030" stroke-width="2"/><path fill="#a88818" stroke="#302000" d="M7 9l5-3 5 3v11l-5 2-5-2z"/><path stroke="#e8d060" stroke-width="2" d="M10 10v10"/></svg></button>

      <span class="grip"></span>
      <button class="tool" aria-label="Update All" disabled><svg viewBox="0 0 24 24"><g stroke="#989898" stroke-width="3"><path d="M3 13C1 4 12 0 20 5M21 11c2 9-9 13-17 8"/><path d="M7 13c-2-7 10-9 11-2 1 6-8 7-9 2 0-3 4-4 5-2"/></g></svg></button>
      <button class="tool" aria-label="Manual Update"><svg viewBox="0 0 24 24"><circle cx="12" cy="12" r="9" fill="#ffffb8" stroke="#009999" stroke-width="2"/><path stroke="#0a0a50" stroke-width="3" d="M3 14C1 6 8 2 13 3"/><path fill="#fff" stroke="#000" d="M11 5c2-1 3 0 3 2v4l6 1c2 1 2 4 1 9h-8c-2-3-4-5-4-7 1-1 2 0 2 1z"/></svg></button>
      <button class="tool" aria-label="Axis System"><svg viewBox="0 0 24 24"><path stroke="#e8c860" d="M10 5v10h11M9 16l-6 5"/><path stroke="#0a0a50" d="M9 14V3M6 5l3-3 3 3M10 14h12M19 11l3 3-3 3M9 15l-7 6M2 17v4h4"/></svg></button>
      <button class="tool" aria-label="Historical Graph"><svg viewBox="0 0 24 24"><path stroke="#fff" stroke-dasharray="1 1" d="M3 1h18v21H3z"/><path stroke="#009999" d="M8 4h5v3H8zM16 7h5v3h-5zM16 17h5v3h-5z"/><path stroke="#0000e0" d="M2 13h4M8 9h6v3H8zM8 15h6v3H8zM16 12h6v3h-6z"/></svg></button>
      <button class="tool more" aria-label="Work on Support"><svg viewBox="0 0 24 24"><path stroke="#009fb0" d="M2 4h20M2 9h20M2 14h20M2 19h20"/><path stroke="#0000e0" d="M4 2v20M9 2v20M14 2v20M19 2v20"/></svg></button>
      <button class="tool more" aria-label="Snap to Point"><svg viewBox="0 0 24 24"><path fill="#4de6ff" stroke="#000" d="M5 5l4-3h12v16l-4 4H5zM5 5h12l4-3M17 5v16"/><path stroke="#fff" stroke-width="2" d="M2 14h16l4-5"/><path stroke="#009fb0" d="M2 15h16l4-5V6"/></svg></button>
      <button class="tool" aria-label="Bounding Body"><svg viewBox="0 0 24 24"><path fill="#009fa8" stroke="#000" d="M4 8l5-5h12v12l-5 6H4z"/><path fill="#4de6ff" stroke="#000" d="M4 8h12v13H4zM16 8l5-5"/><path fill="#70e8f8" stroke="#0a3050" d="M9 8v7h7M9 15l-5 6"/></svg></button>
      <button class="tool" aria-label="Parent/Children"><svg viewBox="0 0 24 24"><path stroke="#0000e0" d="M2 3h7v4H2zM5 7v8h4M15 14h7v4h-7z"/><path stroke="#b00000" stroke-width="2" d="M13 8l-4 5h5l-4 7"/></svg></button>
      <button class="tool" aria-label="Insert Mode" disabled><svg viewBox="0 0 24 24"><path fill="#d8d8e8" stroke="#989898" d="M2 10l8-7 12-1v3l-9 3-5 5-5 0zM3 14h9M5 17h5v4H5zM14 17h7v4h-7z"/><path stroke="#989898" d="M8 7h8M9 10h6"/></svg></button>
      <button class="tool" aria-label="Reorder"><svg viewBox="0 0 24 24"><path stroke="#0000e0" d="M2 2h6v3H2zM3 6v16M3 12h3M3 19h3M15 13h7v3h-7z"/><path stroke="#009999" d="M6 7h7v3H6zM6 18h7v3H6z"/><path stroke="#000" d="M6 14h8M9 11l-3 3 3 3"/></svg></button>
      <button class="tool more" aria-label="Only Current Body"><svg viewBox="0 0 24 24"><path fill="#e4e4f4" stroke="#0000c0" stroke-dasharray="2 1" d="M2 15C1 5 8 0 16 4l-6 5z"/><path fill="#ffff00" stroke="#504800" d="M7 8c6-5 14-3 14 3v9l-5 2c0-6-3-10-9-9z"/></svg></button>
      <button class="tool" aria-label="Multi Output"><svg viewBox="0 0 24 24"><path stroke="#009999" d="M8 3h8v4H8zM8 17h8v4H8z"/><path stroke="#0000c0" d="M8 10h8v4H8z"/></svg></button>
      <button class="tool more" aria-label="Catalog Browser"><svg viewBox="0 0 24 24"><path fill="#fff" stroke="#0868d0" d="M2 13l9 5L22 7v5L11 22l-9-5z"/><path fill="#c0e4f4" stroke="#0000c0" d="M2 13L13 2l9 5-11 11z"/><path stroke="#009999" d="M3 15l8 5 11-11"/></svg></button>
      <label class="combo set-combo"><select aria-label="In Work Object"><option>Geometrical Set.1</option></select><i></i></label>

      <span class="grip"></span>
      <button class="tool" aria-label="Dimension Table" disabled><svg viewBox="0 0 24 24"><path stroke="#989898" d="M3 2v8M16 2v8M3 5h13M2 13h11v9H2zM2 16h11M2 19h11M18 7v15M21 7v15M16 7h7M16 22h7"/></svg></button>
      <button class="tool" aria-label="Bounding Size"><svg viewBox="0 0 24 24"><path fill="#60d8e8" stroke="#000" d="M2 8h13v13H2z"/><path stroke="#e8e040" stroke-width="3" d="M2 3h13M20 8v13"/><path stroke="#000" d="M2 1v5M15 1v5M2 3h13M17 8h5M17 21h5M20 8v13"/></svg></button>
      <span class="grip"></span>
      <button class="tool more" aria-label="Text with Leader"><svg viewBox="0 0 24 24"><text x="5" y="10">ABC</text><path stroke="#0a0a50" d="M22 12H8l-5 4"/><path fill="#0a0a50" stroke="none" d="M1 18v-6l6 5z"/></svg></button>
      <span class="grip"></span>
      <button class="tool more" aria-label="Sectioning"><svg viewBox="0 0 24 24"><path fill="#a0a0b0" stroke="#686878" d="M2 7l11-6 9 2v13l-8 4-12-2z"/><path fill="#c08890" stroke="#a00000" d="M9 6l9-4v12l-9 5z"/><path stroke="#0868f0" stroke-width="2" d="M6 20V9M3 11l3-4 3 4M6 20h9M13 16l4 4-4 3"/></svg></button>
      <span class="grip"></span>
      <button class="tool more" aria-label="Distance Analysis"><svg viewBox="0 0 24 24"><path fill="#4de6ff" stroke="#0868d0" d="M3 6l5-3 4-1c-2 5-3 9-2 12l-4 4-4-4z"/><path stroke="#0a0a50" d="M1 23L22 2"/><path stroke="#0000c0" d="M12 3c6-2 10 4 9 8l-5 2"/><path stroke="#c00000" stroke-width="2" d="M7 11h9M9 9l-2 2 2 2M14 9l2 2-2 2"/><path stroke="#009999" d="M5 21h14"/></svg></button>

      <svg class="brand" viewBox="0 0 40 32"><path fill="none" stroke="#e02020" stroke-width="2" d="M9 1c8-1 10 1 4 5l-4 2"/><path fill="none" stroke="#402888" stroke-width="2" d="M4 11c8 0 9 3 5 7-3 3-6 4-8 3l5-7"/><path fill="none" stroke="#f0a010" stroke-width="3" d="M24 9c-8-1-10 3-6 5s3 7-6 6"/><text x="8" y="30">CATIA</text></svg>
    </div>

    <div class="statusbar">
      <label for="command">Select an object or a command</label>
      <input id="command" type="text">
      <button aria-label="Power input"><svg viewBox="0 0 16 16"><path stroke="#fff" d="M2 15h14V3"/><path stroke="#888" stroke-width="2" d="M3 3h7v6H3zM1 13h13V2"/></svg></button>
      <button aria-label="Info"><svg viewBox="0 0 16 16"><path stroke="#fff" d="M2 15h14V3"/><circle cx="8" cy="7" r="5" stroke="#888"/><path stroke="#888" stroke-width="2" d="M8 3v1M8 6v5M6 10h4M1 14h14V3"/></svg></button>
    </div>
    <div class="taskbar"><span></span></div>
  </footer>

</body>
</html>
```
FILE: styles.css
```css
* {
  margin: 0;
  padding: 0;
  box-sizing: border-box;
}

body {
  font-family: "Liberation Sans", sans-serif;
  font-size: 11px;
  color: #000;
  background: #cfcfe6;
  height: 100vh;
  display: flex;
  flex-direction: column;
  overflow: hidden;
}

button {
  border: 0;
  background: none;
  display: flex;
  flex: none;
  align-items: center;
  justify-content: center;
}

svg {
  display: block;
  fill: none;
}

.sprite {
  position: absolute;
  width: 0;
  height: 0;
}

/* title and menu */

.titlebar {
  display: flex;
  align-items: center;
  height: 22px;
  padding: 0 2px 0 3px;
  border-top: 1px solid #6c6a88;
  border-bottom: 1px solid #6c6c8c;
  background: linear-gradient(#9c98b8, #b4b2c8 25%, #d8d8e2 60%, #fff 85%, #d4d4e2);
}

.app-icon {
  width: 16px;
  height: 16px;
  flex: none;
}

.titlebar h1 {
  flex: 1;
  padding-left: 8px;
  font: bold 12px "DejaVu Sans Condensed", "DejaVu Sans", sans-serif;
  text-shadow: 1px 1px 1px #aaa;
}

.win-buttons {
  display: flex;
  gap: 2px;
}

.win-buttons button {
  width: 17px;
  height: 17px;
  border: 1px solid #666688;
  border-radius: 3px;
  background: linear-gradient(135deg, #f4f4fa, #8c8cac);
}

.win-buttons svg {
  width: 16px;
  height: 16px;
}

.win-buttons .close {
  background: linear-gradient(135deg, #f0a0a0, #c83030);
  border-color: #a04050;
}

.menubar {
  display: flex;
  align-items: center;
  height: 19px;
  padding: 0 2px 0 1px;
}

.menubar .app-icon {
  width: 20px;
}

.menubar ul {
  flex: 1;
  display: flex;
  align-self: stretch;
  list-style: none;
}

.menubar a {
  display: block;
  height: 100%;
  padding: 0 12px 0 6px;
  line-height: 21px;
  color: #000;
  text-decoration: none;
}

.menubar .active a {
  padding-right: 14px;
  background: #fee6bc;
}

.doc-buttons button {
  border-color: #dcdce4;
  border-radius: 0;
  background: #ececf0;
}

/* toolbars */

.toolbar {
  display: flex;
  align-items: flex-start;
  height: 37px;
  padding-top: 6px;
  border-bottom: 2px solid #58586a;
  background: linear-gradient(#fff, #e4e4f2 18%, #cfcfe6 40%, #cfcfe6 75%, #9c9cb4);
}

.grip {
  flex: none;
  width: 3px;
  height: 17px;
  margin: -2px 6px 0 10px;
  border: 1px solid #fff;
  border-right-color: #888;
  border-bottom-color: #888;
  background: #e4e4ee;
}

.toolbar > .grip:first-child {
  margin-left: 6px;
}

.sep {
  flex: none;
  align-self: stretch;
  width: 3px;
  margin: -2px 3px 0 2px;
  border-left: 1px solid #888;
  background: #fff;
}

.tool {
  position: relative;
  width: 28px;
  height: 28px;
}

.tool svg {
  width: 24px;
  height: 24px;
  overflow: visible;
  shape-rendering: crispEdges;
  filter: drop-shadow(3px 2px 0 rgba(120, 120, 130, 0.25));
}

.tool text {
  font: 9px "Liberation Sans", sans-serif;
  fill: #0a0a50;
}

.more {
  width: 30px;
  padding-right: 2px;
}

.narrow {
  width: 22px;
}

.wide {
  width: 30px;
}

.more::after {
  content: "";
  position: absolute;
  right: 0;
  bottom: 0;
  border: 4px solid transparent;
  border-top-color: #000;
  border-bottom: 0;
}

.framed::after {
  outline: 1px solid #fff;
  background: #fff;
}

.combos {
  display: flex;
  gap: 3px;
  padding: 3px 0 0 1px;
}

.combo {
  display: flex;
  width: 60px;
  height: 21px;
  border: 2px solid #707070;
  border-right: 1px solid #f4f4e8;
  border-bottom: 1px solid #f4f4e8;
  background: #fff;
}

.combo select {
  flex: 1;
  min-width: 0;
  padding-left: 3px;
  border: 0;
  appearance: none;
  background: none;
  color: #000;
  font: 11px "Liberation Sans", sans-serif;
}

.combo i {
  width: 16px;
  border: 1px solid #fff;
  border-right-color: #666;
  border-bottom-color: #666;
  background: #d4d4e0;
}

.combo i::before {
  content: "";
  display: block;
  width: 0;
  margin: 6px auto 0;
  border: 4px solid transparent;
  border-top-color: #000;
  border-bottom: 0;
}

.combo.short {
  width: 40px;
}

.combo.disabled {
  background: #d8d8dc;
}

.combo.disabled select {
  color: #aaa;
  opacity: 1;
}

.combo.disabled i::before {
  border-top-color: #aaa;
}

.combo.set-combo {
  width: 150px;
  margin: 4px 0 0 1px;
}

.toolbar-right {
  display: flex;
  height: 100%;
  margin-left: auto;
  padding-right: 77px;
}

/* workspace */

main {
  flex: 1;
  min-height: 0;
  display: flex;
}

.viewport {
  position: relative;
  flex: 1;
  min-width: 0;
  overflow: hidden;
  border-top: 2px solid #606070;
  border-left: 2px solid #808090;
  background: linear-gradient(#333366, #434370 54%, #4a4977 62%, #68688d 77%, #9292ad 92%, #aaaabe);
}

.scene {
  position: absolute;
  inset: 0;
  width: 100%;
  height: 100%;
}

.edge-light {
  stroke: #fff;
  stroke-width: 2;
}

.edge-dots {
  stroke: #000;
  stroke-width: 1;
  stroke-dasharray: 2 2;
}

.glyph-outline {
  stroke: #000;
  stroke-width: 5;
  stroke-linejoin: round;
}

.glyph-fill {
  stroke: #fff;
  stroke-width: 1;
}

.note {
  font: 18px "DejaVu Sans", sans-serif;
  text-anchor: middle;
  fill: #000;
}

.note .bad {
  fill: #f00;
}

.axis {
  font: 12px "DejaVu Sans Condensed", sans-serif;
  fill: #d8d800;
}

.axis.big {
  font-size: 14px;
}

.axis.light {
  fill: #fff;
}

.tree {
  position: relative;
  width: 300px;
}

.tree-lines {
  position: absolute;
  width: 110px;
  height: 536px;
  stroke: #fff;
  stroke-width: 2;
}

.tree ul {
  position: relative;
  display: grid;
  grid-auto-rows: 1fr;
  height: 536px;
  list-style: none;
}

.tree li {
  display: flex;
  align-items: center;
  padding-left: 24px;
}

.tree li.root {
  padding-left: 1px;
}

.tree li.l2 {
  padding-left: 48px;
}

.tree li.l3 {
  padding-left: 72px;
}

.tree li > button {
  width: 16px;
  margin: 0 6px 0 -22px;
}

.tree li > button svg {
  width: 16px;
  height: 16px;
}

.tree li > svg {
  width: 28px;
  height: 28px;
  flex: none;
}

.tree span {
  margin-left: 2px;
  padding: 0 2px 0 1px;
  border-radius: 3px;
  background: #343466;
  color: #fff;
  font: 20px "DejaVu Sans Condensed", "DejaVu Sans", sans-serif;
  line-height: 25px;
  white-space: nowrap;
}

.current span {
  text-decoration: underline;
  text-decoration-thickness: 2px;
}

/* floating toolbars */

.float {
  position: absolute;
  padding: 2px;
  border: 1px solid #77779a;
  background: #f0f0f6;
}

.float-test {
  left: 324px;
  top: 85px;
}

.float-filter {
  left: 517px;
  top: 83px;
}

.float-glyph {
  left: 319px;
  top: 215px;
}

.float-title {
  display: flex;
  align-items: center;
  justify-content: space-between;
  height: 18px;
  padding: 1px 3px 0 1px;
  background: linear-gradient(#9c98b8, #b8b6cc 40%, #f4f4f8);
}

.float-title h2 {
  font: bold 11px "DejaVu Sans Condensed", "DejaVu Sans", sans-serif;
  white-space: nowrap;
}

.float-title button {
  width: 13px;
  height: 13px;
  border: 1px solid #d05050;
  background: #f09090;
}

.float-title svg {
  width: 12px;
  height: 12px;
  stroke: #fff;
  stroke-width: 2;
}

.float-body {
  display: flex;
  height: 36px;
  padding: 4px 2px 0 0;
  border: 1px solid #77779a;
  border-bottom: 2px solid #50505e;
  background: linear-gradient(#fff, #d8d8ea 30%, #cfcfe6 65%, #9c9cb4);
}

.float-body .grip {
  margin: 0 6px 0 4px;
}

.float-body .sep {
  margin-top: -1px;
}

.float-filter .float-body {
  height: 38px;
  padding-top: 6px;
}

/* right bar */

.sidebar {
  flex: none;
  width: 38px;
  padding: 1px 0 0 6px;
  border-left: 2px solid #fff;
  background: linear-gradient(90deg, #fff, #cfcfe6 12px, #cfcfe6 28px, #9898b0);
}

.hgrip {
  display: block;
  width: 17px;
  height: 3px;
  margin: 8px 0 6px -2px;
  border: 1px solid #fff;
  border-right-color: #888;
  border-bottom-color: #888;
}

.dock .tool.more {
  height: 30px;
  padding-bottom: 2px;
}

.dock-bench {
  padding-bottom: 32px;
}

.dock-sketch {
  padding-bottom: 8px;
}

.dock-repeat {
  padding-bottom: 3px;
}

/* bottom */

.bottom-toolbar {
  height: 38px;
  padding-top: 7px;
}

.brand {
  width: 40px;
  height: 32px;
  margin: -6px 7px 0 auto;
  overflow: visible;
}

.brand text {
  font: italic bold 10px "Liberation Sans", sans-serif;
  fill: #402888;
}

.statusbar {
  display: flex;
  align-items: center;
  height: 24px;
  padding-left: 3px;
  gap: 1px;
}

.statusbar label {
  flex: 1;
}

.statusbar input {
  width: 299px;
  height: 17px;
  border: 1px solid #f4f4e8;
  border-top: 2px solid #707070;
  border-left: 2px solid #707070;
  background: #fff;
}

.statusbar button {
  width: 33px;
  height: 21px;
  border: 1px solid #fff;
  border-right: 1px solid #000;
  border-bottom: 2px solid #000;
}

.statusbar svg {
  width: 16px;
  height: 16px;
}

.taskbar {
  height: 4px;
  border-top: 1px solid #77779a;
  background: #fff;
}

.taskbar span {
  display: block;
  width: 97px;
  height: 3px;
  border-top: 1px solid #208020;
  background: #70d058;
}
```
